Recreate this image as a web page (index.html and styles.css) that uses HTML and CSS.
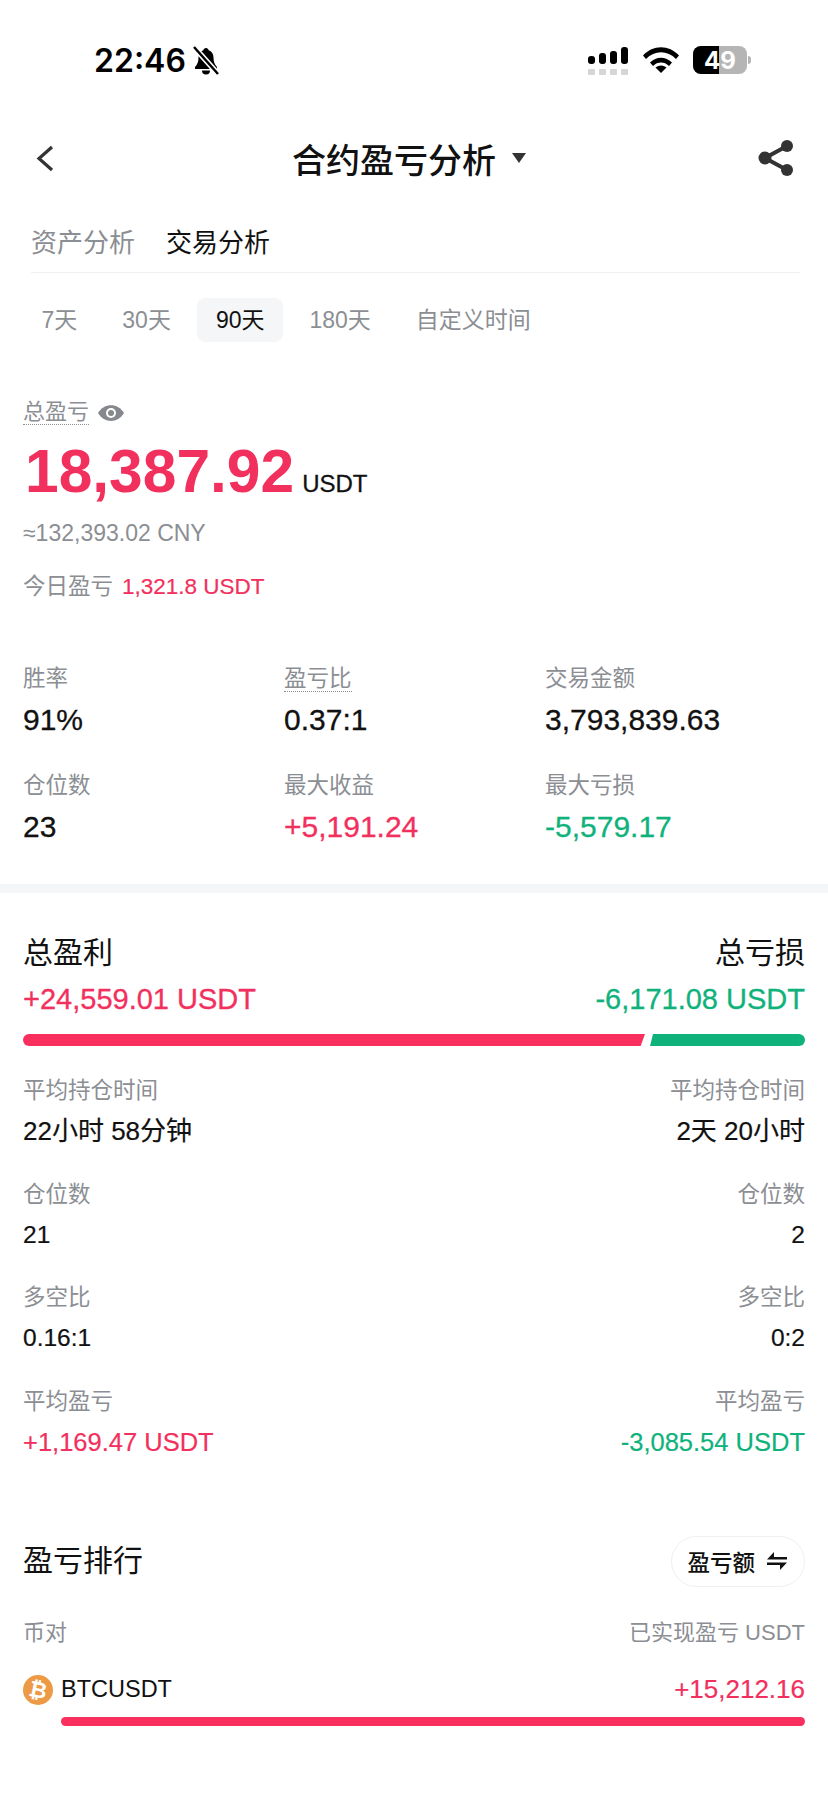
FILE: index.html
```html
<!DOCTYPE html>
<html lang="zh-CN">
<head>
    <meta charset="UTF-8">
    <meta name="viewport" content="width=device-width, initial-scale=1.0">
    <title>合约盈亏分析</title>
    <link rel="stylesheet" href="styles.css">
</head>
<body>
    <!-- barra di stato -->
    <div class="status-bar">
        <div class="status-left">
            <span class="clock">22:46</span>
            <svg class="bell" viewBox="0 0 28 30" width="28" height="30">
                <path d="M14 2c-1.500 0-2.400 1-2.600 2.200C8.200 5.300 6.500 8 6.500 11.500c0 4.200-1 6.800-3.500 9.500v2h22v-2c-2.500-2.700-3.500-5.300-3.500-9.500 0-3.500-1.700-6.200-4.900-7.300C16.400 3 15.500 2 14 2z" fill="#000"/>
                <path d="M10 24.500a4 4 0 0 0 8 0z" fill="#000"/>
                <path d="M2 1l24 27" stroke="#fff" stroke-width="5.500"/>
                <path d="M2 1l24 27" stroke="#000" stroke-width="2.500"/>
            </svg>
        </div>
        <div class="status-right">
            <div class="signal">
                <div class="signal-top">
                    <i class="sig-1"></i><i class="sig-2"></i><i class="sig-3"></i><i class="sig-4"></i>
                </div>
                <div class="signal-bottom">
                    <i></i><i></i><i></i><i></i>
                </div>
            </div>
            <svg class="wifi" viewBox="0 0 36 26" width="36" height="26">
                <path d="M0 8.500C10-2.500 26-2.500 36 8.500l-3 3.500C24.500 3 11.500 3 3 12z" fill="#000"/>
                <path d="M7 15.500c6.500-6.500 15.500-6.500 22 0l-3 3.500c-4.800-4.600-11.200-4.600-16 0z" fill="#000"/>
                <path d="M12.500 20.500c3.400-2.800 7.600-2.800 11 0L18 26z" fill="#000"/>
            </svg>
            <div class="battery">
                <div class="battery-body">
                    <span class="battery-fill"></span>
                    <span class="battery-text">49</span>
                </div>
                <span class="battery-nub"></span>
            </div>
        </div>
    </div>

    <div class="nav-bar">
        <svg class="back" viewBox="0 0 18 27" width="18" height="27">
            <path d="M16 2L3 13.500 16 25" fill="none" stroke="#333" stroke-width="3.200"/>
        </svg>
        <div class="nav-title">
            <span>合约盈亏分析</span>
            <span class="caret"></span>
        </div>
        <svg class="share" viewBox="0 0 36 38" width="36" height="38">
            <path d="M29 7L7 19l22 12" fill="none" stroke="#333" stroke-width="4"/>
            <circle cx="29" cy="7" r="6" fill="#333"/>
            <circle cx="7" cy="19" r="6.500" fill="#333"/>
            <circle cx="29" cy="31" r="6" fill="#333"/>
        </svg>
    </div>

    <div class="tabs">
        <span class="tab">资产分析</span>
        <span class="tab active">交易分析</span>
    </div>

    <div class="periods">
        <span class="period">7天</span>
        <span class="period">30天</span>
        <span class="period active">90天</span>
        <span class="period">180天</span>
        <span class="period">自定义时间</span>
    </div>

    <div class="summary">
        <div class="total-label">
            <span class="dotted">总盈亏</span>
            <svg viewBox="0 0 26 16" width="26" height="16">
                <path d="M0 8C6-2.500 20-2.500 26 8 20 18.500 6 18.500 0 8z" fill="#85888c"/>
                <circle cx="13" cy="8" r="5" fill="#fff"/>
                <circle cx="13" cy="8" r="3" fill="#85888c"/>
            </svg>
        </div>
        <div class="total-value">18,387.92<span class="unit">USDT</span></div>
        <div class="total-cny">≈132,393.02 CNY</div>
        <div class="today">今日盈亏<span class="today-value red">1,321.8 USDT</span></div>
    </div>

    <div class="stats">
        <div class="stat">
            <div class="label">胜率</div>
            <div class="value">91%</div>
        </div>
        <div class="stat">
            <div class="label"><span class="dotted">盈亏比</span></div>
            <div class="value">0.37:1</div>
        </div>
        <div class="stat">
            <div class="label">交易金额</div>
            <div class="value">3,793,839.63</div>
        </div>
        <div class="stat">
            <div class="label">仓位数</div>
            <div class="value">23</div>
        </div>
        <div class="stat">
            <div class="label">最大收益</div>
            <div class="value red">+5,191.24</div>
        </div>
        <div class="stat">
            <div class="label">最大亏损</div>
            <div class="value green">-5,579.17</div>
        </div>
    </div>

    <div class="band"></div>

    <div class="pnl">
        <div class="pnl-head">
            <div class="pnl-title">总盈利</div>
            <div class="pnl-title">总亏损</div>
        </div>
        <div class="pnl-head pnl-amounts">
            <div class="pnl-amount red">+24,559.01 USDT</div>
            <div class="pnl-amount green">-6,171.08 USDT</div>
        </div>
        <div class="ratio-bar">
            <div class="ratio-win"></div>
            <div class="ratio-loss"></div>
        </div>

        <div class="detail-grid">
            <div class="detail">
                <div class="label">平均持仓时间</div>
                <div class="detail-value detail-time">22小时 58分钟</div>
            </div>
            <div class="detail right">
                <div class="label">平均持仓时间</div>
                <div class="detail-value detail-time">2天 20小时</div>
            </div>
            <div class="detail">
                <div class="label">仓位数</div>
                <div class="detail-value">21</div>
            </div>
            <div class="detail right">
                <div class="label">仓位数</div>
                <div class="detail-value">2</div>
            </div>
            <div class="detail">
                <div class="label">多空比</div>
                <div class="detail-value">0.16:1</div>
            </div>
            <div class="detail right">
                <div class="label">多空比</div>
                <div class="detail-value">0:2</div>
            </div>
            <div class="detail">
                <div class="label">平均盈亏</div>
                <div class="detail-value red">+1,169.47 USDT</div>
            </div>
            <div class="detail right">
                <div class="label">平均盈亏</div>
                <div class="detail-value green">-3,085.54 USDT</div>
            </div>
        </div>
    </div>

    <div class="ranking">
        <div class="ranking-head">
            <div class="ranking-title">盈亏排行</div>
            <div class="sort-btn">
                <span>盈亏额</span>
                <svg viewBox="0 0 20 18" width="20" height="18">
                    <path d="M0 7.500L7 0v5h13v2.500z" fill="#111"/>
                    <path d="M20 10.500L13 18v-5H0v-2.500z" fill="#111"/>
                </svg>
            </div>
        </div>
        <div class="ranking-cols">
            <span class="label">币对</span>
            <span class="label">已实现盈亏 USDT</span>
        </div>
        <div class="coin-row">
            <div class="coin">
                <svg class="coin-icon" viewBox="0 0 30 30" width="30" height="30">
                    <circle cx="15" cy="15" r="15" fill="#ec9a45"/>
                    <text x="15" y="22.500" text-anchor="middle" transform="rotate(12 15 15)" class="coin-glyph">₿</text>
                </svg>
                <span>BTCUSDT</span>
            </div>
            <div class="coin-value red">+15,212.16</div>
        </div>
        <div class="coin-bar"></div>
    </div>
</body>
</html>
```

FILE: styles.css
```css
body {
    margin: 0;
    width: 828px;
    min-height: 1800px;
    background-color: #fff;
    color: #111;
    font-family: "Liberation Sans", "Noto Sans CJK SC", sans-serif;
    font-size: 22px;
}

.red { color: #f2305e; }
.green { color: #10b27c; }
.label { color: #8b8e93; font-size: 22.500px; line-height: 30px; }
.dotted { border-bottom: 1px dotted #8b8e93; }

/* status bar */
.status-bar {
    height: 100px;
    display: flex;
    justify-content: space-between;
    box-sizing: border-box;
    padding: 46px 77px 0 94px;
}
.status-left { display: flex; gap: 6px; height: 30px; align-items: center; }
.clock { font-family: Inter, sans-serif; font-weight: 600; font-size: 32px; line-height: 30px; color: #000; }
.status-right { display: flex; align-items: flex-start; }
.signal { width: 40px; margin-right: 15px; display: flex; flex-direction: column; gap: 5px; margin-top: 1px; }
.signal-top { display: flex; align-items: flex-end; justify-content: space-between; height: 17px; }
.signal-top i { width: 7px; background-color: #000; border-radius: 3px; display: block; }
.sig-1 { height: 8px; }
.sig-2 { height: 11px; }
.sig-3 { height: 13px; }
.sig-4 { height: 17px; }
.signal-bottom { display: flex; justify-content: space-between; }
.signal-bottom i { width: 7px; height: 6px; background-color: #d6d6d6; border-radius: 1px; display: block; }
.wifi { margin-right: 14px; margin-top: 1px; }
.battery { display: flex; align-items: center; gap: 1px; }
.battery-body {
    position: relative;
    width: 54px;
    height: 28px;
    border-radius: 8px;
    background-color: #b5b5b5;
    overflow: hidden;
    display: flex;
    align-items: center;
    justify-content: center;
}
.battery-fill { position: absolute; left: 0; top: 0; bottom: 0; width: 26px; background-color: #000; }
.battery-text { position: relative; color: #fff; font-family: Inter, sans-serif; font-weight: 700; font-size: 24px; }
.battery-nub { width: 3px; height: 8px; background-color: #b5b5b5; border-radius: 0 3px 3px 0; }

/* nav */
.nav-bar {
    height: 116px;
    display: flex;
    align-items: center;
    justify-content: space-between;
    box-sizing: border-box;
    padding: 0 34px 0 36px;
}
.nav-title { display: flex; align-items: center; gap: 16px; margin-left: 6px; font-size: 34px; font-weight: 500; color: #111; }
.caret { width: 0; height: 0; border-left: 7px solid transparent; border-right: 7px solid transparent; border-top: 10px solid #333; }

/* tabs */
.tabs {
    margin: 0 28px 0 31px;
    height: 57px;
    box-sizing: border-box;
    border-bottom: 1px solid #f0f1f2;
    display: flex;
    gap: 31px;
    font-size: 26px;
    line-height: 54px;
}
.tab { color: #8b8e93; }
.tab.active { color: #111; }

.periods {
    display: flex;
    gap: 8px;
    margin: 25px 0 0 23px;
}
.period {
    padding: 0 18.500px;
    height: 44px;
    line-height: 44px;
    font-size: 23px;
    color: #8b8e93;
    border-radius: 8px;
}
.period.active { background-color: #f5f6f7; color: #111; }

/* summary */
.summary { padding: 58px 0 0 23px; }
.total-label { display: flex; align-items: center; gap: 9px; height: 25px; color: #8b8e93; line-height: 24px; }
.total-value { margin: 16px 0 0 2px; font-size: 60.500px; line-height: 60px; font-weight: 700; color: #f2305e; }
.unit { font-size: 24px; font-weight: 400; color: #111; margin-left: 8px; -webkit-text-stroke: 0.3px #111; }
.total-cny { margin-top: 4px; font-size: 23px; line-height: 30px; color: #8b8e93; }
.today { margin-top: 24px; font-size: 22.500px; line-height: 30px; color: #8b8e93; }
.today-value { margin-left: 9px; -webkit-text-stroke: 0.2px #f2305e; }

.stats {
    display: grid;
    grid-template-columns: 261px 261px 261px;
    row-gap: 36px;
    padding: 62px 0 42px 23px;
}
.stat .value { margin-top: 11px; font-size: 30px; line-height: 30px; -webkit-text-stroke: 0.3px; }

.band { height: 9px; background-color: #f5f6f7; }

/* totals */
.pnl { padding: 40px 23px 0; }
.pnl-head { display: flex; justify-content: space-between; }
.pnl-title { font-size: 30px; line-height: 40px; }
.pnl-amounts { margin-top: 8px; }
.pnl-amount { font-size: 29px; line-height: 36px; -webkit-text-stroke: 0.3px; }
.ratio-bar { display: flex; gap: 5px; height: 12px; margin-top: 17px; }
.ratio-win { width: 622px; background-color: #f92f5e; border-radius: 6px 0 0 6px; clip-path: polygon(0 0, 100% 0, 99.300% 100%, 0 100%); }
.ratio-loss { flex: 1; background-color: #10b27c; border-radius: 0 6px 6px 0; clip-path: polygon(3px 0, 100% 0, 100% 100%, 0 100%); }

.detail-grid {
    display: grid;
    grid-template-columns: 1fr 1fr;
    row-gap: 33.500px;
    margin-top: 30px;
}
.detail.right { text-align: right; }
.detail-value { margin-top: 10px; font-size: 24.500px; line-height: 30px; -webkit-text-stroke: 0.2px; }
.detail-value.detail-time { font-size: 26px; }
.detail-value.red, .detail-value.green { font-size: 25.500px; }

/* ranking */
.ranking { padding: 79px 23px 0; }
.ranking-head { display: flex; justify-content: space-between; align-items: center; }
.ranking-title { font-size: 30px; line-height: 40px; }
.sort-btn {
    height: 51px;
    box-sizing: border-box;
    padding: 0 17px 0 15px;
    border: 1px solid #eeeff0;
    border-radius: 26px;
    display: flex;
    align-items: center;
    gap: 12px;
    font-size: 22.500px;
    font-weight: 500;
}
.ranking-cols { display: flex; justify-content: space-between; margin-top: 31px; line-height: 30px; }
.ranking-cols .label { font-size: 22px; }
.coin-row { display: flex; justify-content: space-between; align-items: center; margin-top: 27px; height: 30px; }
.coin { display: flex; align-items: center; gap: 8px; font-size: 23.500px; }
.coin-icon { display: block; }
.coin-glyph { font-family: "DejaVu Sans", sans-serif; font-size: 22px; font-weight: 700; fill: #fff; }
.coin-value { font-size: 26px; -webkit-text-stroke: 0.2px; }
.coin-bar { height: 9px; margin: 12px 0 0 38px; background-color: #f92f5e; border-radius: 5px; }
```
